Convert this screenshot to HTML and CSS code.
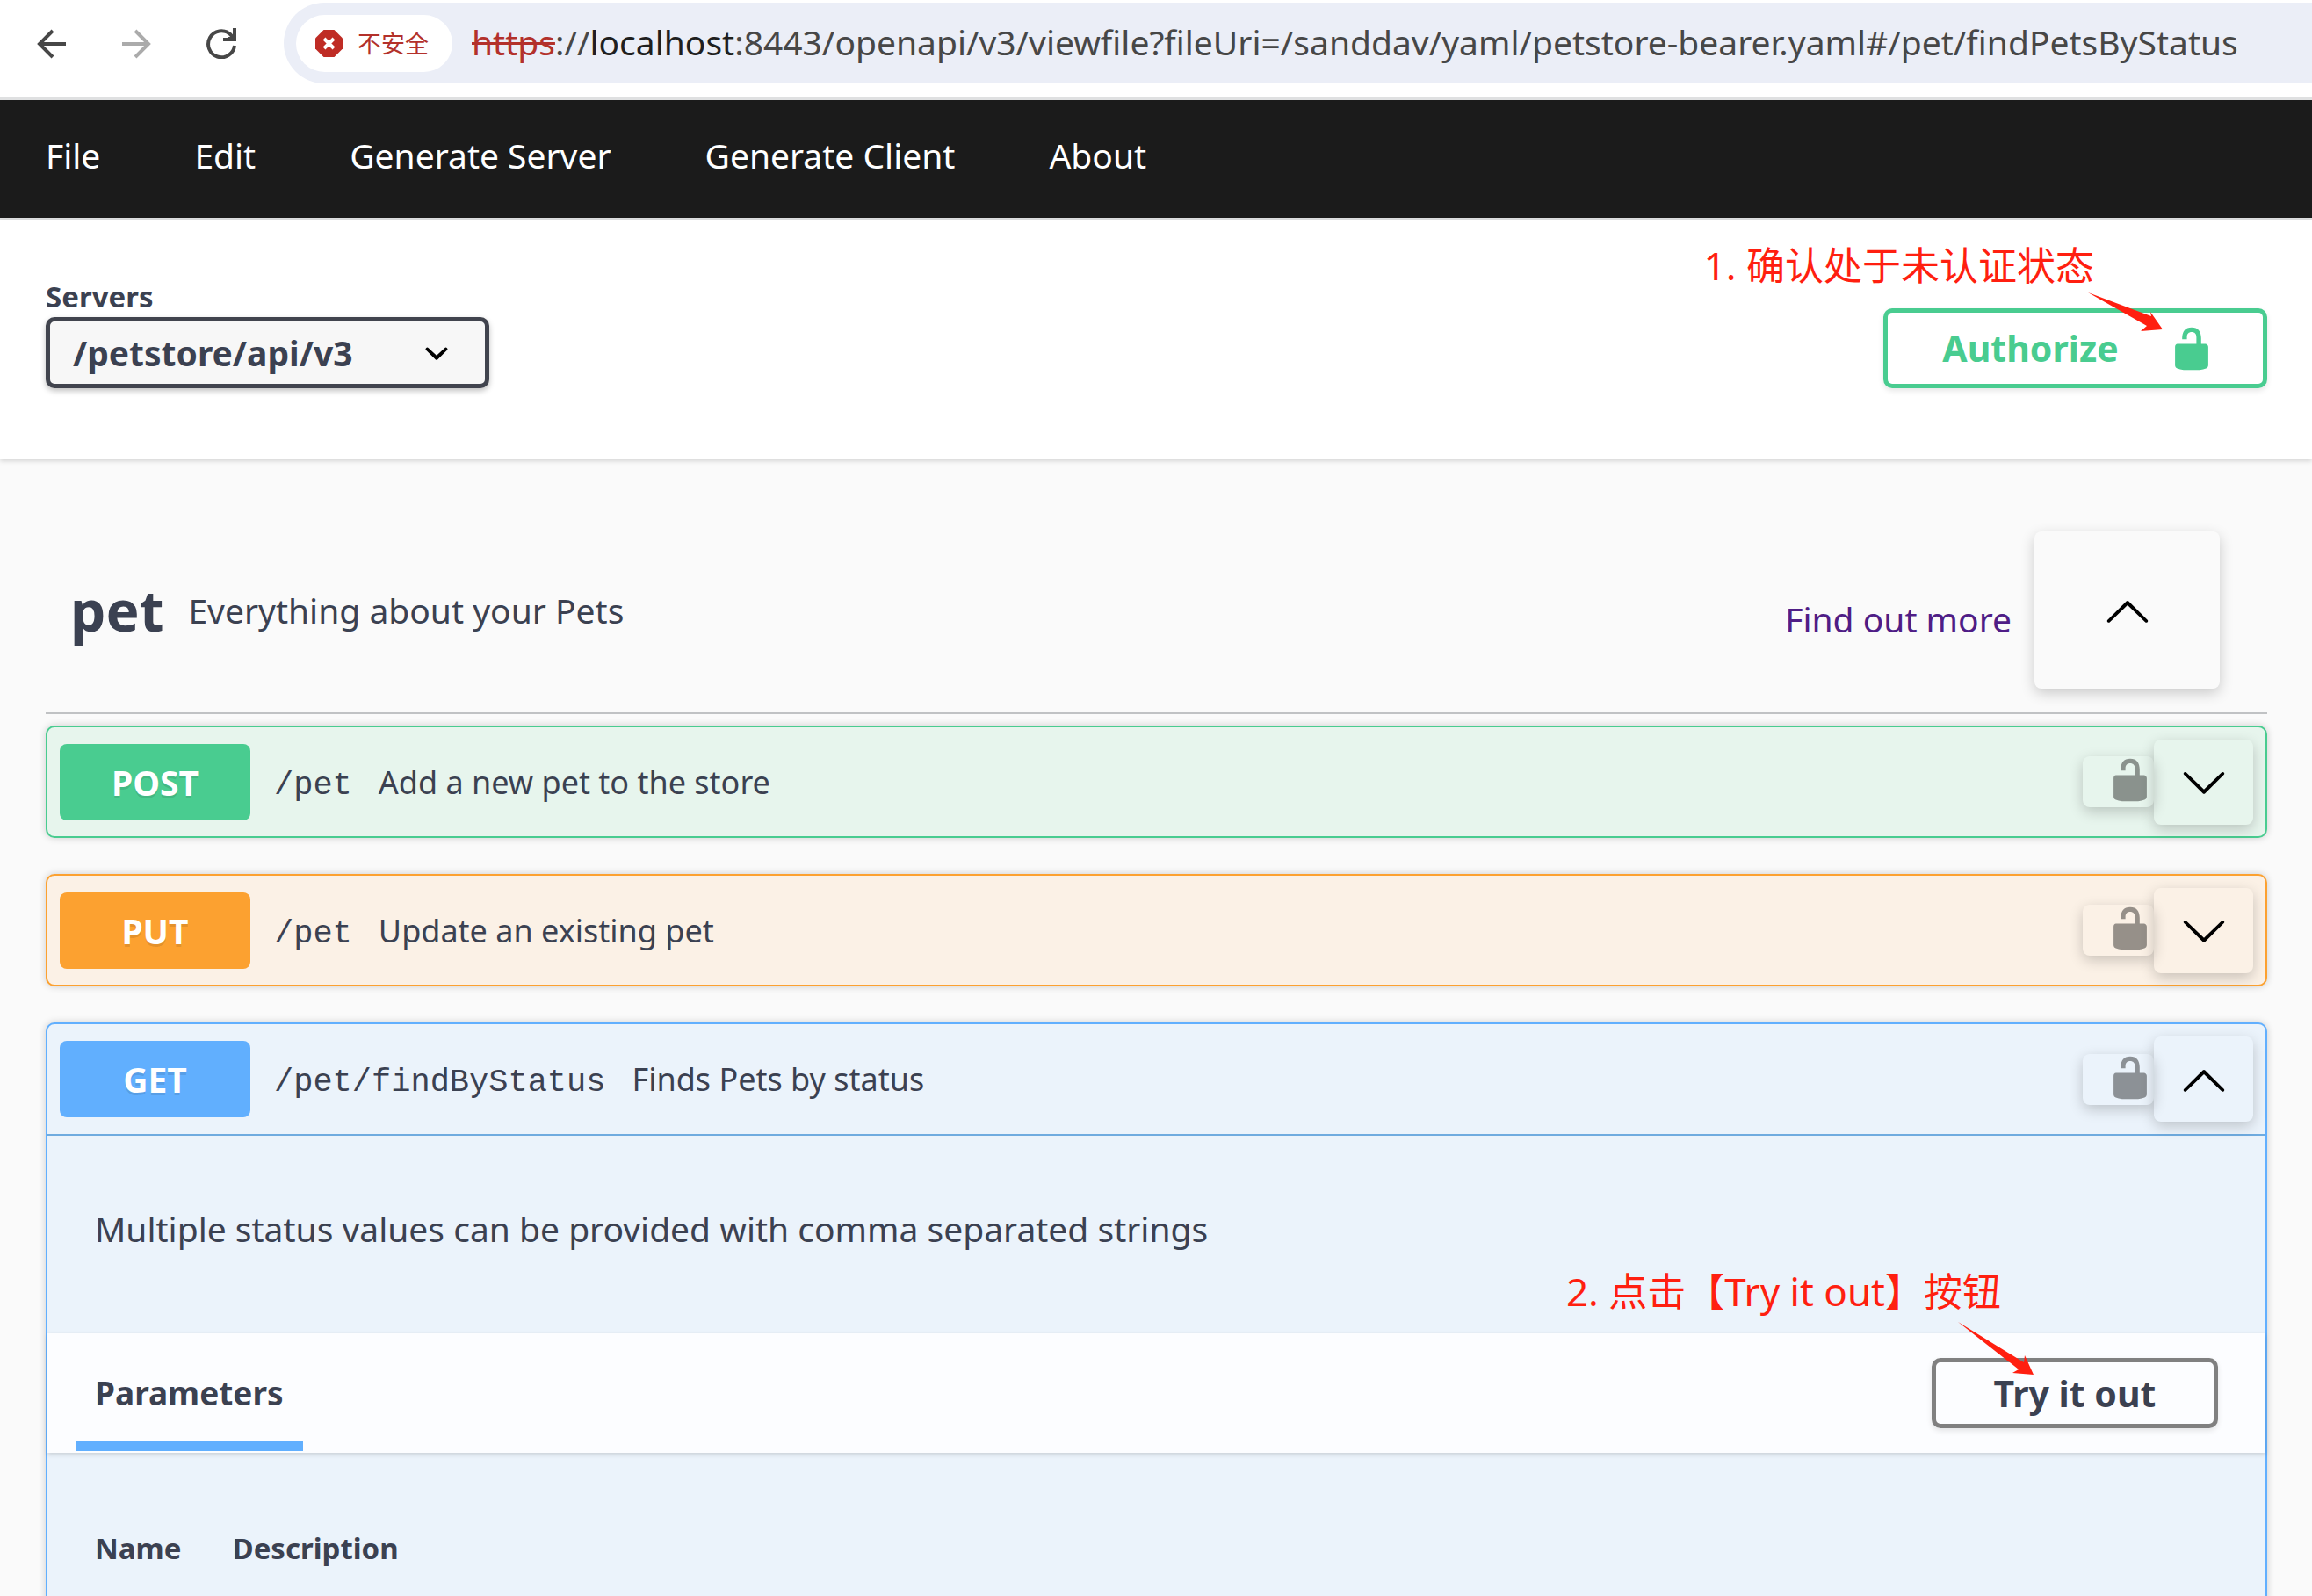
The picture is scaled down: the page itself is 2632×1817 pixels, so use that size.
FILE: index.html
```html
<!DOCTYPE html>
<html lang="en">
<head>
  <meta charset="utf-8">
  <title>Swagger Editor</title>
  <link rel="stylesheet" href="styles.css">
</head>
<body>
  <svg class="sprite" aria-hidden="true">
    <symbol id="unlocked" viewBox="0 0 20 20"><path d="M15.8 8H14V5.6C14 2.703 12.665 1 10 1 7.334 1 6 2.703 6 5.6V6h2v-.801C8 3.754 8.797 3 10 3c1.203 0 2 .754 2 2.199V8H4c-.553 0-1 .646-1 1.199V17c0 .549.428 1.139.951 1.307l1.197.387C5.672 18.861 6.55 19 7.1 19h5.8c.549 0 1.428-.139 1.951-.307l1.196-.387c.524-.167.953-.757.953-1.306V9.199C17 8.646 16.352 8 15.8 8z"/></symbol>
    <symbol id="arrow-down" viewBox="0 0 20 20"><path d="M17.418 6.109c.272-.268.709-.268.979 0s.271.701 0 .969l-7.908 7.83c-.27.268-.707.268-.979 0l-7.908-7.83c-.27-.268-.27-.701 0-.969s.709-.268.979 0L10 13.25l7.418-7.141z"/></symbol>
    <symbol id="arrow-up" viewBox="0 0 20 20"><path d="M17.418 14.908c.272.268.709.268.979 0s.271-.701 0-.969l-7.908-7.83c-.27-.268-.707-.268-.979 0l-7.908 7.83c-.27.268-.27.701 0 .969s.709.268.979 0L10 7.767l7.418 7.141z"/></symbol>
  </svg>

  <header class="toolbar">
    <button class="tool" type="button" aria-label="Back"><svg viewBox="0 0 36 36"><path d="M35 19H5M20 4L5 19l15 15"/></svg></button>
    <button class="tool tool-off" type="button" aria-label="Forward"><svg viewBox="0 0 36 36"><path d="M2 19h29M17 4l15 15-15 15"/></svg></button>
    <button class="tool" type="button" aria-label="Reload"><svg viewBox="0 0 36 36"><path d="M33 21A15 15 0 1 1 28 8l4 4.500"/><path d="M33 1v13H20M30 9v4h-5"/></svg></button>
    <div class="omnibox">
      <button class="chip" type="button">
        <svg class="chip-icon" viewBox="0 0 31 31"><path fill="#bf2c25" d="M9.500 0h12L31 9.500v12L21.500 31h-12L0 21.500v-12z"/><path d="M10 10l11 11M21 10L10 21" stroke="#fff" stroke-width="4" fill="none"/></svg>
        <span>不安全</span>
      </button>
      <div class="url" role="textbox" aria-label="Address"><s>https</s>://<b>localhost</b>:8443/openapi/v3/viewfile?fileUri=/sanddav/yaml/petstore-bearer.yaml#/pet/findPetsByStatus</div>
    </div>
  </header>

  <nav class="menu">
    <a href="#file">File</a>
    <a href="#edit">Edit</a>
    <a href="#server">Generate Server</a>
    <a href="#client">Generate Client</a>
    <a href="#about">About</a>
  </nav>

  <section class="scheme">
    <div class="servers">
      <label for="server">Servers</label>
      <select id="server"><option>/petstore/api/v3</option></select>
    </div>
    <button class="btn authorize" type="button">Authorize<svg class="icon"><use href="#unlocked"/></svg></button>
    <p class="note note-auth">1. 确认处于未认证状态</p>
    <svg class="pointer pointer-auth" width="86" height="46" viewBox="0 0 86 46"><path d="M1 1L73 28 72 23 86 43 61 45 68 39z"/></svg>
  </section>

  <main class="operations">
    <div class="tag">
      <h1>pet</h1>
      <p>Everything about your Pets</p>
      <a href="#more">Find out more</a>
      <button class="toggle" type="button" aria-label="Collapse pet"><svg class="icon"><use href="#arrow-up"/></svg></button>
    </div>

    <article class="op post">
      <div class="summary">
        <span class="method">POST</span>
        <code>/pet</code>
        <span class="brief">Add a new pet to the store</span>
        <button class="lock" type="button" aria-label="Authorization"><svg class="icon"><use href="#unlocked"/></svg></button>
        <button class="toggle" type="button" aria-label="Expand"><svg class="icon"><use href="#arrow-down"/></svg></button>
      </div>
    </article>

    <article class="op put">
      <div class="summary">
        <span class="method">PUT</span>
        <code>/pet</code>
        <span class="brief">Update an existing pet</span>
        <button class="lock" type="button" aria-label="Authorization"><svg class="icon"><use href="#unlocked"/></svg></button>
        <button class="toggle" type="button" aria-label="Expand"><svg class="icon"><use href="#arrow-down"/></svg></button>
      </div>
    </article>

    <article class="op get open">
      <div class="summary">
        <span class="method">GET</span>
        <code>/pet/findByStatus</code>
        <span class="brief">Finds Pets by status</span>
        <button class="lock" type="button" aria-label="Authorization"><svg class="icon"><use href="#unlocked"/></svg></button>
        <button class="toggle" type="button" aria-label="Collapse"><svg class="icon"><use href="#arrow-up"/></svg></button>
      </div>
      <div class="details">
        <p>Multiple status values can be provided with comma separated strings</p>
        <p class="note note-try">2. 点击【Try it out】按钮</p>
        <svg class="pointer pointer-try" width="88" height="62" viewBox="0 0 88 62"><path d="M1 1L76 47 77 39 87 61 63 59 70 55z"/></svg>
      </div>
      <div class="panel">
        <h2>Parameters</h2>
        <button class="btn try" type="button">Try it out</button>
      </div>
      <table class="params">
        <thead><tr><th scope="col">Name</th><th scope="col">Description</th></tr></thead>
      </table>
    </article>
  </main>
</body>
</html>
```
FILE: styles.css
```css
* { box-sizing: border-box; margin: 0; }

body {
  display: flex;
  flex-direction: column;
  height: 100vh;
  overflow: hidden;
  background: #fafafa;
  color: #3b4151;
  font: 39px/53px "Noto Sans", "Noto Sans CJK SC", sans-serif;
}

button { border: 0; background: none; padding: 0; color: inherit; font: inherit; }
a { color: inherit; text-decoration: none; }
svg { display: block; flex: none; }
.sprite { display: none; }
.icon { width: 54px; height: 54px; fill: currentColor; }

/* Browser toolbar */
.toolbar {
  display: flex;
  align-items: center;
  flex: none;
  gap: 61px;
  padding: 3px 0 16px 40px;
  border-bottom: 3px solid #dfe0e1;
  background: #fff;
}
.tool svg { width: 36px; height: 36px; fill: none; stroke: #474747; stroke-width: 4; }
.tool-off svg { stroke: #ababab; }
.omnibox {
  display: flex;
  align-items: center;
  flex: 1;
  min-width: 0;
  height: 92px;
  margin-left: -8px;
  padding-left: 14px;
  border-radius: 46px 0 0 46px;
  background: #ebeef7;
}
.chip {
  display: flex;
  align-items: center;
  flex: none;
  gap: 17px;
  height: 65px;
  padding: 0 27px 0 22px;
  border-radius: 33px;
  background: #fff;
  color: #b3312b;
  font-size: 27px;
}
.chip-icon { width: 31px; height: 31px; }
.url { margin-left: 22px; padding-bottom: 3px; color: #474747; white-space: nowrap; }
.url s { color: #b3312b; text-decoration-thickness: 3px; }
.url b { color: #1f1f1f; font-weight: 400; }

/* Editor menu */
.menu {
  display: flex;
  flex: none;
  gap: 107px;
  padding: 36px 52px 45px;
  border-bottom: 2px solid #dfe0e1;
  background: #1b1b1b;
  color: #fff;
}

/* Server choice and authorization */
.scheme {
  position: relative;
  z-index: 1;
  display: flex;
  justify-content: space-between;
  align-items: flex-end;
  flex: none;
  padding: 66px 51px 81px 52px;
  background: #fff;
  box-shadow: 0 2px 5px rgba(0, 0, 0, .15);
}
.servers label { display: block; margin-bottom: 1px; font-size: 33px; line-height: 44px; font-weight: 700; }
.servers select {
  display: block;
  width: 505px;
  height: 81px;
  padding: 0 100px 0 26px;
  appearance: none;
  border: 5px solid #41444e;
  border-radius: 10px;
  background: #f7f7f7 url("data:image/svg+xml,%3Csvg xmlns='http://www.w3.org/2000/svg' viewBox='0 0 20 20'%3E%3Cpath d='M13.418 7.859a.695.695 0 01.978 0 .68.68 0 010 .969l-3.908 3.83a.697.697 0 01-.979 0l-3.908-3.83a.68.68 0 010-.969.695.695 0 01.978 0L10 11l3.418-3.141z'/%3E%3C/svg%3E") right 28px center / 54px 54px no-repeat;
  box-shadow: 0 3px 6px rgba(0, 0, 0, .25);
  color: inherit;
  font: inherit;
  font-weight: 700;
}
.btn {
  display: flex;
  align-items: center;
  justify-content: center;
  border: 5px solid #808080;
  border-radius: 10px;
  box-shadow: 0 3px 6px rgba(0, 0, 0, .1);
  font-size: 41px;
  font-weight: 700;
}
.authorize { gap: 56px; width: 437px; height: 91px; padding-left: 8px; border-color: #49cc90; color: #49cc90; }
.try { width: 326px; height: 80px; }

/* Red callouts */
.note { position: absolute; z-index: 2; color: #ff1f10; font-size: 44px; line-height: 60px; white-space: nowrap; }
.pointer { position: absolute; z-index: 2; fill: #ff1f10; }
.note-auth { top: 22px; right: 248px; }
.pointer-auth { top: 82px; right: 170px; }
.note-try { top: 147px; right: 301px; }
.pointer-try { top: 211px; right: 263px; }

/* Operations */
.operations { flex: 1; min-height: 0; padding: 56px 51px 0 52px; }
.tag {
  display: flex;
  align-items: center;
  margin-bottom: 13px;
  padding: 26px 54px 27px 28px;
  border-bottom: 2px solid #c0c2c4;
}
.tag h1 { margin-right: 28px; font-size: 64px; line-height: 84px; }
.tag p { flex: 1; }
.tag a { margin-right: 26px; padding-top: 20px; color: #4f1d86; }
.toggle, .lock { border-radius: 8px; box-shadow: 0 5px 16px rgba(0, 0, 0, .2); color: #000; }
.toggle { display: grid; place-items: center; width: 113px; height: 97px; }
.tag .toggle { width: 211px; height: 179px; }
.lock { width: 81px; height: 58px; padding: 0 0 4px 27px; }
.lock .icon { opacity: .4; }

.op {
  margin-bottom: 41px;
  border: 2px solid var(--line);
  border-radius: 10px;
  background: var(--fill);
  box-shadow: 0 0 8px rgba(0, 0, 0, .19);
}
.post { --line: #49cc90; --fill: #e7f5ed; }
.put { --line: #fca130; --fill: #fbf1e6; }
.get { --line: #61affe; --fill: #ebf3fb; }
.summary { display: flex; align-items: center; height: 124px; padding: 0 14px; }
.open .summary { height: 127px; border-bottom: 2px solid #6fabdf; }
.method {
  width: 217px;
  margin-right: 27px;
  border-radius: 8px;
  background: var(--line);
  color: #fff;
  font-weight: 700;
  line-height: 87px;
  text-align: center;
  text-shadow: 0 3px 0 rgba(0, 0, 0, .1);
}
.summary code { margin-right: 30px; padding-top: 8px; font: 37px/53px "Liberation Mono", monospace; }
.brief { flex: 1; font-size: 36px; }

.details { position: relative; padding: 79px 54px 93px; }
.panel {
  display: flex;
  justify-content: space-between;
  align-items: center;
  height: 136px;
  padding: 0 54px 0 32px;
  background: #fcfdff;
  box-shadow: 0 2px 5px rgba(0, 0, 0, .15);
}
.panel h2 {
  align-self: stretch;
  margin-bottom: 2px;
  padding: 13px 22px 0;
  border-bottom: 11px solid #61affe;
  font-size: 37px;
  line-height: 110px;
}
.params { margin: 87px 54px 100px; border-collapse: collapse; }
.params th { padding: 0 58px 0 0; font-size: 33px; line-height: 44px; text-align: left; }
```
